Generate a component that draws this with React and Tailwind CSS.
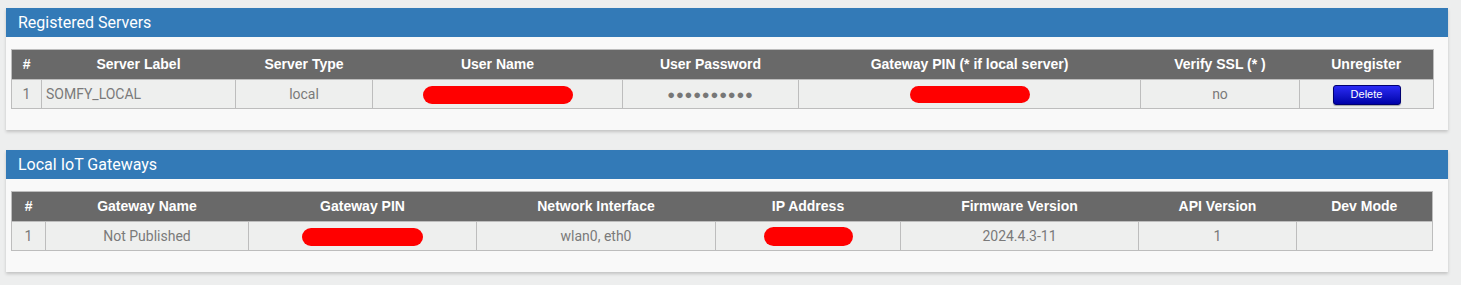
import React from 'react';

/**
 * Gateway admin panels: registered servers and local IoT gateways.
 */

function Redacted({ width, height = 18 }) {
    return (
        <svg width={width} height={height} viewBox={`0 0 ${width} ${height}`} className="inline-block align-middle">
            <rect x="0" y="0" width={width} height={height} rx={height / 2} fill="#ff0000" />
        </svg>
    );
}

function Panel({ title, children }) {
    return (
        <section className="ml-[6px] w-[1442px] bg-[#f9f9f9] shadow-[0_2px_3px_rgba(0,0,0,0.18)]">
            <div className="h-[29px] bg-[#337ab7] px-3 flex items-center text-white text-[16px] font-['Roboto',sans-serif] font-normal">
                {title}
            </div>
            <div className="pl-[5px] pt-[12px] pb-[21px]">{children}</div>
        </section>
    );
}

function DataTable({ columns, row }) {
    return (
        <table className="table-fixed border-collapse w-[1422px] border border-[#bdbdbd] font-['Roboto',sans-serif] text-[14px]">
            <colgroup>
                {columns.map((c) => (
                    <col key={c.label} style={{ width: c.width }} />
                ))}
            </colgroup>
            <thead>
                <tr className="h-[30px] bg-[#696969]">
                    {columns.map((c) => (
                        <th key={c.label} className="text-white font-bold text-center font-['Liberation_Sans',Arial,sans-serif] text-[14px] px-1">
                            {c.label}
                        </th>
                    ))}
                </tr>
            </thead>
            <tbody>
                <tr className="h-[29px] bg-[#eeefee]">
                    {row.map((cell, i) => (
                        <td
                            key={i}
                            className={`border border-[#bdbdbd] text-[#7a7a7a] px-1 ${columns[i].align === 'left' ? 'text-left' : 'text-center'}`}
                        >
                            {cell}
                        </td>
                    ))}
                </tr>
            </tbody>
        </table>
    );
}

export default function App() {
    const serverCols = [
        { label: '#', width: 30 },
        { label: 'Server Label', width: 194, align: 'left' },
        { label: 'Server Type', width: 137 },
        { label: 'User Name', width: 250 },
        { label: 'User Password', width: 176 },
        { label: 'Gateway PIN (* if local server)', width: 342 },
        { label: 'Verify SSL (* )', width: 159 },
        { label: 'Unregister', width: 134 },
    ];

    const gatewayCols = [
        { label: '#', width: 34 },
        { label: 'Gateway Name', width: 203 },
        { label: 'Gateway PIN', width: 228 },
        { label: 'Network Interface', width: 239 },
        { label: 'IP Address', width: 185 },
        { label: 'Firmware Version', width: 238 },
        { label: 'API Version', width: 158 },
        { label: 'Dev Mode', width: 136 },
    ];

    return (
        <div className="min-h-[285px] w-[1461px] bg-[#edeeee] pt-[8px] pb-[13px] flex flex-col gap-[20px]">
            <Panel title="Registered Servers">
                <DataTable
                    columns={serverCols}
                    row={[
                        '1',
                        'SOMFY_LOCAL',
                        'local',
                        <Redacted key="u" width={150} height={18} />,
                        <span key="p" className="text-[13px] tracking-[0.8px] text-[#777]">●●●●●●●●●●</span>,
                        <Redacted key="g" width={120} height={17} />,
                        'no',
                        <button
                            key="d"
                            className="w-[68px] h-[20px] rounded-[3px] border border-[#000070] bg-gradient-to-b from-[#2a2af5] to-[#0000a8] text-white text-[11px] font-['Liberation_Sans',Arial,sans-serif] leading-none shadow-[0_1px_1px_rgba(0,0,0,0.3)]"
                        >
                            Delete
                        </button>,
                    ]}
                />
            </Panel>
            <Panel title="Local IoT Gateways">
                <DataTable
                    columns={gatewayCols}
                    row={[
                        '1',
                        'Not Published',
                        <Redacted key="g2" width={121} height={18} />,
                        'wlan0, eth0',
                        <Redacted key="ip" width={89} height={19} />,
                        '2024.4.3-11',
                        '1',
                        '',
                    ]}
                />
            </Panel>
        </div>
    );
}
